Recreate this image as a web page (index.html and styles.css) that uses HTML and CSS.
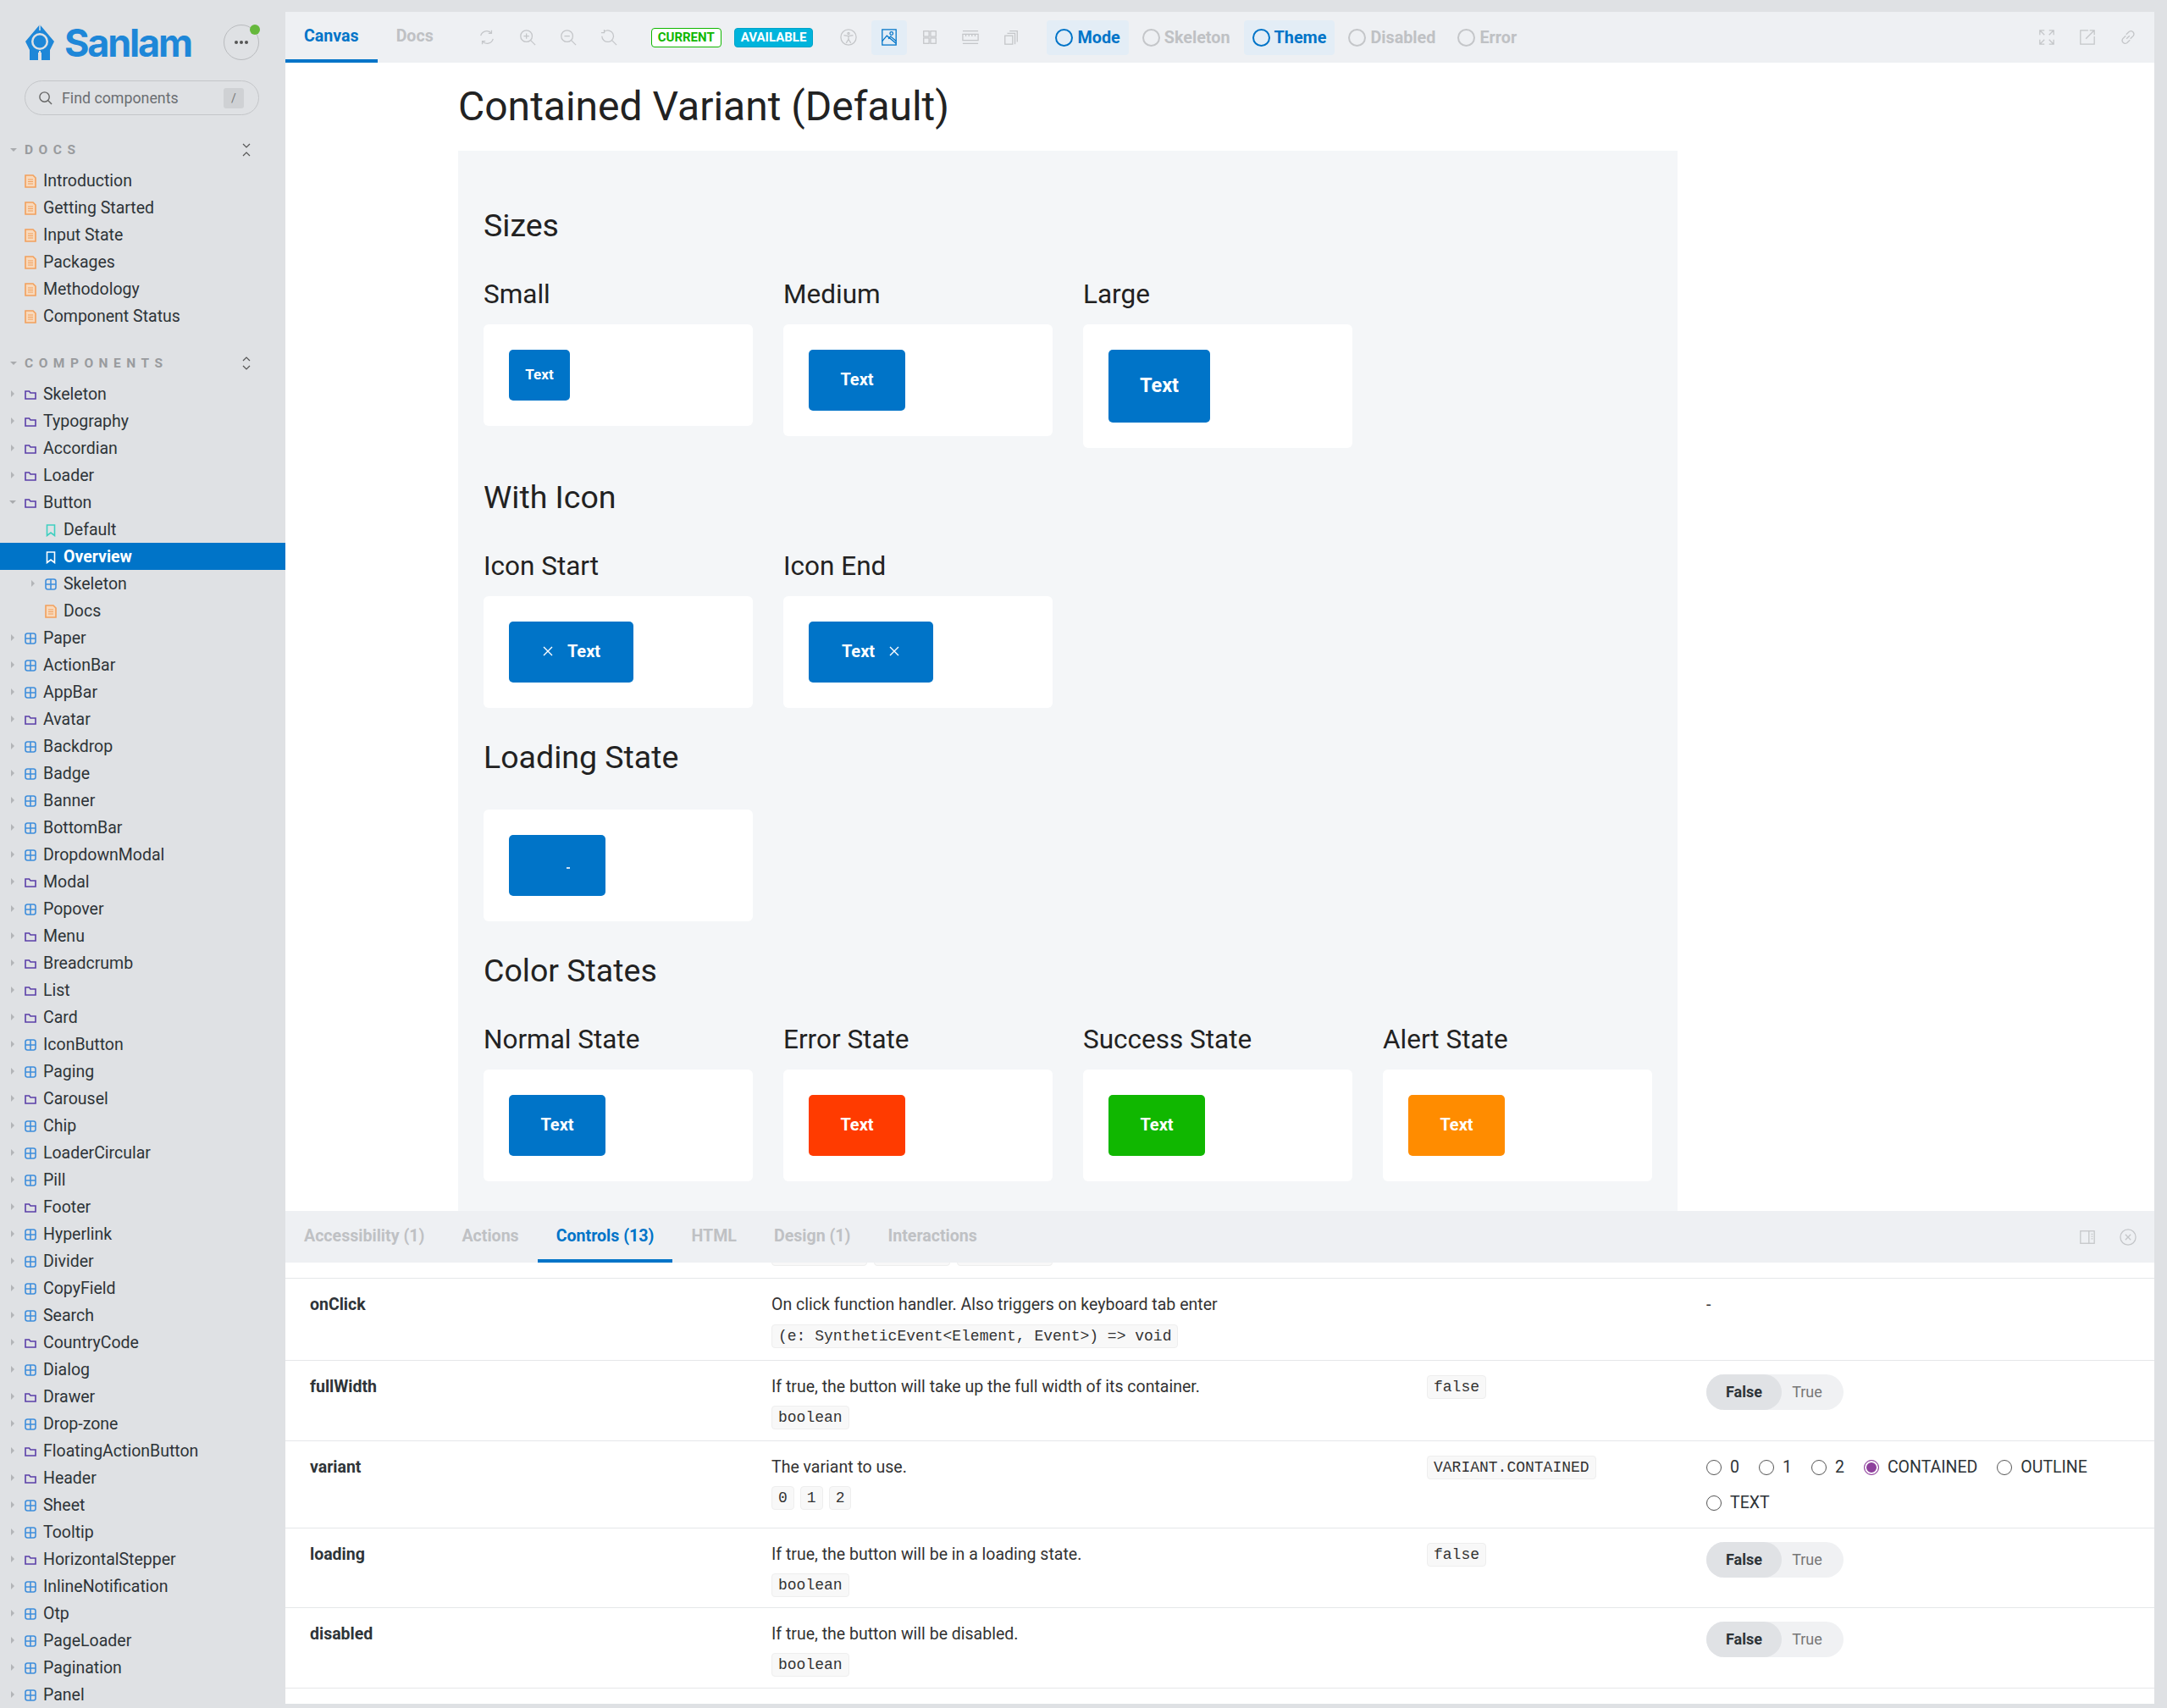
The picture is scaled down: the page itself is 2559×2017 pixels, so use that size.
FILE: index.html
```html
<!DOCTYPE html>
<html>
	<head>
		<title>Button / Overview</title>
		<link rel="stylesheet" href="styles.css">
	</head>
	<body>
		<svg class="defs" width="0" height="0">
			<symbol id="i-doc" viewBox="0 0 14 16"><path d="M1 1h9l3 3v11H1z" fill="#f8d9bc" stroke="#f2a05c" stroke-width="1.6"/><path d="M4 6h6M4 8.5h6M4 11h6" stroke="#f2a05c" stroke-width="1.2"/></symbol>
			<symbol id="i-folder" viewBox="0 0 14 16"><path d="M1 4h4.500l1.500 2h6v7H1z" fill="none" stroke="#5b3fa8" stroke-width="1.600"/></symbol>
			<symbol id="i-comp" viewBox="0 0 14 16"><rect x="1" y="2" width="12" height="12" rx="2.500" fill="none" stroke="#3f8edb" stroke-width="1.600"/><path d="M7 2v12M1 8h12" stroke="#3f8edb" stroke-width="1.600"/></symbol>
			<symbol id="i-story" viewBox="0 0 12 16"><path d="M1.500 2h9v12.500L6 11l-4.500 3.500z" fill="none" stroke="currentColor" stroke-width="1.600"/></symbol>
			<symbol id="i-x" viewBox="0 0 14 14"><path d="M2 2l10 10M12 2L2 12" fill="none" stroke="currentColor" stroke-width="1.400"/></symbol>
		</svg>

		<aside class="sidebar">
			<div class="brand">
				<svg class="brand-mark" viewBox="0 0 36 43">
					<path d="M18 0L35 20L30 30V42H20V33H16V42H6V30L1 20z" fill="#1e87d8"/>
					<path d="M18 0v7" stroke="#dfe1e4" stroke-width="1.500"/>
					<circle cx="18" cy="20" r="10" fill="#dfe1e4"/>
					<circle cx="18" cy="20" r="7.500" fill="#1e87d8"/>
					<path d="M18 31v12" stroke="#dfe1e4" stroke-width="2"/>
				</svg>
				<span class="brand-name">Sanlam</span>
				<span class="menu-btn"><i></i><i></i><i></i><b class="menu-dot"></b></span>
			</div>
			<div class="search">
				<svg class="search-ico" viewBox="0 0 18 18"><circle cx="8" cy="8" r="6" fill="none" stroke="#666" stroke-width="1.500"/><path d="M12.500 12.500L17 17" stroke="#666" stroke-width="1.500"/></svg>
				<span class="search-text">Find components</span>
				<span class="search-key">/</span>
			</div>

			<div class="side-head">
				<span class="caret-down"></span><span class="side-title">DOCS</span>
				<svg class="side-toggle" viewBox="0 0 10 16"><path d="M1 1l4 4 4-4M1 15l4-4 4 4" fill="none" stroke="#555" stroke-width="1.200"/></svg>
			</div>
			<ul class="tree">
				<li class="item"><span class="caret-none"></span><svg class="ico"><use href="#i-doc"/></svg>Introduction</li>
				<li class="item"><span class="caret-none"></span><svg class="ico"><use href="#i-doc"/></svg>Getting Started</li>
				<li class="item"><span class="caret-none"></span><svg class="ico"><use href="#i-doc"/></svg>Input State</li>
				<li class="item"><span class="caret-none"></span><svg class="ico"><use href="#i-doc"/></svg>Packages</li>
				<li class="item"><span class="caret-none"></span><svg class="ico"><use href="#i-doc"/></svg>Methodology</li>
				<li class="item"><span class="caret-none"></span><svg class="ico"><use href="#i-doc"/></svg>Component Status</li>
			</ul>

			<div class="side-head head-two">
				<span class="caret-down"></span><span class="side-title">COMPONENTS</span>
				<svg class="side-toggle" viewBox="0 0 10 16"><path d="M1 5l4-4 4 4M1 11l4 4 4-4" fill="none" stroke="#555" stroke-width="1.200"/></svg>
			</div>
			<ul class="tree">
				<li class="item"><span class="caret"></span><svg class="ico"><use href="#i-folder"/></svg>Skeleton</li>
				<li class="item"><span class="caret"></span><svg class="ico"><use href="#i-folder"/></svg>Typography</li>
				<li class="item"><span class="caret"></span><svg class="ico"><use href="#i-folder"/></svg>Accordian</li>
				<li class="item"><span class="caret"></span><svg class="ico"><use href="#i-folder"/></svg>Loader</li>
				<li class="item"><span class="caret-open"></span><svg class="ico"><use href="#i-folder"/></svg>Button</li>
				<li class="item nested"><span class="caret-none"></span><svg class="ico story"><use href="#i-story"/></svg>Default</li>
				<li class="item nested selected"><span class="caret-none"></span><svg class="ico"><use href="#i-story"/></svg>Overview</li>
				<li class="item nested"><span class="caret"></span><svg class="ico"><use href="#i-comp"/></svg>Skeleton</li>
				<li class="item nested"><span class="caret-none"></span><svg class="ico"><use href="#i-doc"/></svg>Docs</li>
				<li class="item"><span class="caret"></span><svg class="ico"><use href="#i-comp"/></svg>Paper</li>
				<li class="item"><span class="caret"></span><svg class="ico"><use href="#i-comp"/></svg>ActionBar</li>
				<li class="item"><span class="caret"></span><svg class="ico"><use href="#i-comp"/></svg>AppBar</li>
				<li class="item"><span class="caret"></span><svg class="ico"><use href="#i-folder"/></svg>Avatar</li>
				<li class="item"><span class="caret"></span><svg class="ico"><use href="#i-comp"/></svg>Backdrop</li>
				<li class="item"><span class="caret"></span><svg class="ico"><use href="#i-comp"/></svg>Badge</li>
				<li class="item"><span class="caret"></span><svg class="ico"><use href="#i-comp"/></svg>Banner</li>
				<li class="item"><span class="caret"></span><svg class="ico"><use href="#i-comp"/></svg>BottomBar</li>
				<li class="item"><span class="caret"></span><svg class="ico"><use href="#i-comp"/></svg>DropdownModal</li>
				<li class="item"><span class="caret"></span><svg class="ico"><use href="#i-folder"/></svg>Modal</li>
				<li class="item"><span class="caret"></span><svg class="ico"><use href="#i-comp"/></svg>Popover</li>
				<li class="item"><span class="caret"></span><svg class="ico"><use href="#i-folder"/></svg>Menu</li>
				<li class="item"><span class="caret"></span><svg class="ico"><use href="#i-folder"/></svg>Breadcrumb</li>
				<li class="item"><span class="caret"></span><svg class="ico"><use href="#i-folder"/></svg>List</li>
				<li class="item"><span class="caret"></span><svg class="ico"><use href="#i-folder"/></svg>Card</li>
				<li class="item"><span class="caret"></span><svg class="ico"><use href="#i-comp"/></svg>IconButton</li>
				<li class="item"><span class="caret"></span><svg class="ico"><use href="#i-comp"/></svg>Paging</li>
				<li class="item"><span class="caret"></span><svg class="ico"><use href="#i-folder"/></svg>Carousel</li>
				<li class="item"><span class="caret"></span><svg class="ico"><use href="#i-comp"/></svg>Chip</li>
				<li class="item"><span class="caret"></span><svg class="ico"><use href="#i-comp"/></svg>LoaderCircular</li>
				<li class="item"><span class="caret"></span><svg class="ico"><use href="#i-comp"/></svg>Pill</li>
				<li class="item"><span class="caret"></span><svg class="ico"><use href="#i-folder"/></svg>Footer</li>
				<li class="item"><span class="caret"></span><svg class="ico"><use href="#i-comp"/></svg>Hyperlink</li>
				<li class="item"><span class="caret"></span><svg class="ico"><use href="#i-comp"/></svg>Divider</li>
				<li class="item"><span class="caret"></span><svg class="ico"><use href="#i-comp"/></svg>CopyField</li>
				<li class="item"><span class="caret"></span><svg class="ico"><use href="#i-comp"/></svg>Search</li>
				<li class="item"><span class="caret"></span><svg class="ico"><use href="#i-folder"/></svg>CountryCode</li>
				<li class="item"><span class="caret"></span><svg class="ico"><use href="#i-comp"/></svg>Dialog</li>
				<li class="item"><span class="caret"></span><svg class="ico"><use href="#i-folder"/></svg>Drawer</li>
				<li class="item"><span class="caret"></span><svg class="ico"><use href="#i-comp"/></svg>Drop-zone</li>
				<li class="item"><span class="caret"></span><svg class="ico"><use href="#i-folder"/></svg>FloatingActionButton</li>
				<li class="item"><span class="caret"></span><svg class="ico"><use href="#i-folder"/></svg>Header</li>
				<li class="item"><span class="caret"></span><svg class="ico"><use href="#i-comp"/></svg>Sheet</li>
				<li class="item"><span class="caret"></span><svg class="ico"><use href="#i-comp"/></svg>Tooltip</li>
				<li class="item"><span class="caret"></span><svg class="ico"><use href="#i-folder"/></svg>HorizontalStepper</li>
				<li class="item"><span class="caret"></span><svg class="ico"><use href="#i-comp"/></svg>InlineNotification</li>
				<li class="item"><span class="caret"></span><svg class="ico"><use href="#i-comp"/></svg>Otp</li>
				<li class="item"><span class="caret"></span><svg class="ico"><use href="#i-comp"/></svg>PageLoader</li>
				<li class="item"><span class="caret"></span><svg class="ico"><use href="#i-comp"/></svg>Pagination</li>
				<li class="item"><span class="caret"></span><svg class="ico"><use href="#i-comp"/></svg>Panel</li>
			</ul>
		</aside>

		<main class="main">
			<div class="bar toolbar">
				<span class="tab active">Canvas</span>
				<span class="tab">Docs</span>
				<div class="tools tools-zoom">
					<span class="tool"><svg viewBox="0 0 22 22"><path d="M3 9a8 8 0 0 1 14-3M19 13a8 8 0 0 1-14 3" /><path d="M17 2v4h-4M5 20v-4h4"/></svg></span>
					<span class="tool"><svg viewBox="0 0 22 22"><circle cx="9.500" cy="9.500" r="7.500"/><path d="M15 15l6 6M9.500 6v7M6 9.500h7"/></svg></span>
					<span class="tool"><svg viewBox="0 0 22 22"><circle cx="9.500" cy="9.500" r="7.500"/><path d="M15 15l6 6M6 9.500h7"/></svg></span>
					<span class="tool"><svg viewBox="0 0 22 22"><path d="M5 3.500a7.500 7.500 0 1 1-3 6"/><path d="M15 15l6 6M5 1v4H1"/></svg></span>
				</div>
				<span class="badge badge-current">CURRENT</span>
				<span class="badge badge-available">AVAILABLE</span>
				<div class="tools tools-view">
					<span class="tool"><svg viewBox="0 0 22 22"><circle cx="11" cy="11" r="10"/><circle cx="11" cy="6" r="1.200"/><path d="M5 8.500l6 1 6-1M11 9.500v4l-3 5M11 13.500l3 5"/></svg></span>
					<span class="tool tool-on"><svg viewBox="0 0 22 22"><rect x="2" y="1" width="18" height="20"/><circle cx="14" cy="6" r="2"/><path d="M2 16l6-7 12 10M10 13l3-3 7 6"/></svg></span>
					<span class="tool"><svg viewBox="0 0 22 22"><rect x="3" y="3" width="7" height="7"/><rect x="12" y="3" width="7" height="7"/><rect x="3" y="12" width="7" height="7"/><rect x="12" y="12" width="7" height="7"/></svg></span>
					<span class="tool"><svg viewBox="0 0 22 22"><path d="M1 3h20M1 19h20"/><rect x="1" y="7" width="20" height="8"/><path d="M5 7v3M9 7v3M13 7v3M17 7v3"/></svg></span>
					<span class="tool"><svg viewBox="0 0 22 22"><rect x="3" y="9" width="10" height="11"/><path d="M6 6h10v14M9 3h10v14"/></svg></span>
				</div>
				<div class="pills">
					<span class="pill pill-on"><i class="ring"></i>Mode</span>
					<span class="pill"><i class="ring"></i>Skeleton</span>
					<span class="pill pill-on"><i class="ring"></i>Theme</span>
					<span class="pill"><i class="ring"></i>Disabled</span>
					<span class="pill"><i class="ring"></i>Error</span>
				</div>
				<div class="tools tools-right">
					<span class="tool"><svg viewBox="0 0 22 22"><path d="M2 8V2h6M2 2l6 6M14 2h6v6M20 2l-6 6M2 14v6h6M2 20l6-6M20 14v6h-6M20 20l-6-6"/></svg></span>
					<span class="tool"><svg viewBox="0 0 22 22"><path d="M12 2H2v18h18V10M9 13L20 2M14 2h6v6"/></svg></span>
					<span class="tool"><svg viewBox="0 0 22 22"><path d="M9 13l4-4M8 9l-4 4a4 4 0 0 0 5.500 5.500l4-4M14 13l4-4A4 4 0 0 0 12.500 3.500l-4 4"/></svg></span>
				</div>
			</div>

			<div class="canvas">
				<h1 class="title">Contained Variant (Default)</h1>
				<div class="sheet">
					<h2 class="heading">Sizes</h2>
					<div class="grid">
						<div>
							<h3 class="label">Small</h3>
							<div class="card"><span class="btn btn-sm">Text</span></div>
						</div>
						<div>
							<h3 class="label">Medium</h3>
							<div class="card"><span class="btn">Text</span></div>
						</div>
						<div>
							<h3 class="label">Large</h3>
							<div class="card"><span class="btn btn-lg">Text</span></div>
						</div>
					</div>

					<h2 class="heading">With Icon</h2>
					<div class="grid">
						<div>
							<h3 class="label">Icon Start</h3>
							<div class="card"><span class="btn btn-icon"><svg class="btn-x"><use href="#i-x"/></svg>Text</span></div>
						</div>
						<div>
							<h3 class="label">Icon End</h3>
							<div class="card"><span class="btn btn-icon">Text<svg class="btn-x"><use href="#i-x"/></svg></span></div>
						</div>
					</div>

					<h2 class="heading">Loading State</h2>
					<div class="grid">
						<div class="card"><span class="btn"><i class="spinner"></i></span></div>
					</div>

					<h2 class="heading">Color States</h2>
					<div class="grid">
						<div>
							<h3 class="label">Normal State</h3>
							<div class="card"><span class="btn">Text</span></div>
						</div>
						<div>
							<h3 class="label">Error State</h3>
							<div class="card"><span class="btn btn-error">Text</span></div>
						</div>
						<div>
							<h3 class="label">Success State</h3>
							<div class="card"><span class="btn btn-success">Text</span></div>
						</div>
						<div>
							<h3 class="label">Alert State</h3>
							<div class="card"><span class="btn btn-alert">Text</span></div>
						</div>
					</div>
				</div>
			</div>

			<div class="addons">
				<div class="bar addon-bar">
					<span class="tab">Accessibility (1)</span>
					<span class="tab">Actions</span>
					<span class="tab active">Controls (13)</span>
					<span class="tab">HTML</span>
					<span class="tab">Design (1)</span>
					<span class="tab">Interactions</span>
					<div class="tools tools-right">
						<span class="tool"><svg viewBox="0 0 22 22"><rect x="2" y="3" width="18" height="16"/><path d="M13 3v16M16 7h2M16 10h2M16 13h2"/></svg></span>
						<span class="tool"><svg viewBox="0 0 22 22"><circle cx="11" cy="11" r="10"/><path d="M7.500 7.500l7 7M14.500 7.500l-7 7"/></svg></span>
					</div>
				</div>
				<div class="args">
					<div class="cut-row">
						<span class="code cut-a">&nbsp;</span><span class="code cut-b">&nbsp;</span><span class="code cut-a">&nbsp;</span>
					</div>
					<div class="row row-first">
						<div class="arg-name">onClick</div>
						<div>
							<div class="arg-desc">On click function handler. Also triggers on keyboard tab enter</div>
							<div class="chips"><span class="code">(e: SyntheticEvent&lt;Element, Event&gt;) =&gt; void</span></div>
						</div>
						<div></div>
						<div class="arg-desc">-</div>
					</div>
					<div class="row">
						<div class="arg-name">fullWidth</div>
						<div>
							<div class="arg-desc">If true, the button will take up the full width of its container.</div>
							<div class="chips"><span class="code">boolean</span></div>
						</div>
						<div class="arg-default"><span class="code">false</span></div>
						<div class="toggle"><span class="toggle-on">False</span><span class="toggle-off">True</span></div>
					</div>
					<div class="row row-variant">
						<div class="arg-name">variant</div>
						<div>
							<div class="arg-desc">The variant to use.</div>
							<div class="chips"><span class="code">0</span><span class="code">1</span><span class="code">2</span></div>
						</div>
						<div class="arg-default"><span class="code">VARIANT.CONTAINED</span></div>
						<div class="radios">
							<span class="radio"><i class="dot"></i>0</span>
							<span class="radio"><i class="dot"></i>1</span>
							<span class="radio"><i class="dot"></i>2</span>
							<span class="radio"><i class="dot dot-on"></i>CONTAINED</span>
							<span class="radio"><i class="dot"></i>OUTLINE</span>
							<span class="radio"><i class="dot"></i>TEXT</span>
						</div>
					</div>
					<div class="row row-short">
						<div class="arg-name">loading</div>
						<div>
							<div class="arg-desc">If true, the button will be in a loading state.</div>
							<div class="chips"><span class="code">boolean</span></div>
						</div>
						<div class="arg-default"><span class="code">false</span></div>
						<div class="toggle"><span class="toggle-on">False</span><span class="toggle-off">True</span></div>
					</div>
					<div class="row">
						<div class="arg-name">disabled</div>
						<div>
							<div class="arg-desc">If true, the button will be disabled.</div>
							<div class="chips"><span class="code">boolean</span></div>
						</div>
						<div></div>
						<div class="toggle"><span class="toggle-on">False</span><span class="toggle-off">True</span></div>
					</div>
				</div>
			</div>
		</main>
	</body>
</html>
```

FILE: styles.css
```css
html, body {
	height: 100%;
}

body {
	margin: 0;
	height: 2017px;
	overflow: hidden;
	display: flex;
	background: #dfe1e4;
	font-family: Roboto, "Liberation Sans", sans-serif;
	font-size: 19.500px;
	color: #2e3438;
}

.defs {
	position: absolute;
}

/* sidebar */

.sidebar {
	width: 337px;
	flex: none;
	box-sizing: border-box;
	padding-top: 29px;
}

.brand {
	display: flex;
	align-items: center;
	height: 42px;
	padding-left: 29px;
}

.brand-mark {
	width: 36px;
	height: 43px;
	flex: none;
}

.brand-name {
	margin-left: 11px;
	font-family: Inter, Roboto, sans-serif;
	font-size: 45px;
	font-weight: 700;
	letter-spacing: -2.200px;
	color: #1e87d8;
}

.menu-btn {
	position: relative;
	box-sizing: border-box;
	width: 42px;
	height: 42px;
	margin-left: auto;
	margin-right: 31px;
	display: flex;
	align-items: center;
	justify-content: center;
	gap: 2px;
	border: 1px solid #b9bbbe;
	border-radius: 50%;
}

.menu-btn i {
	width: 4px;
	height: 4px;
	border-radius: 50%;
	background: #555;
}

.menu-dot {
	position: absolute;
	top: -1px;
	right: -2px;
	width: 12px;
	height: 12px;
	border-radius: 50%;
	background: #66b83c;
}

.search {
	box-sizing: border-box;
	display: flex;
	align-items: center;
	width: 277px;
	height: 41px;
	margin: 24px 0 0 29px;
	padding: 0 17px 0 15px;
	border: 1px solid #c4c6c9;
	border-radius: 21px;
}

.search-ico {
	width: 17px;
	height: 17px;
	flex: none;
}

.search-text {
	margin-left: 11px;
	font-size: 17.800px;
	color: #6b6e72;
}

.search-key {
	margin-left: auto;
	width: 24px;
	height: 24px;
	line-height: 24px;
	text-align: center;
	font-size: 14px;
	color: #777;
	background: #cfd1d4;
	border-radius: 3px;
}

.side-head {
	display: flex;
	align-items: center;
	height: 32px;
	margin-top: 25px;
	margin-bottom: 4px;
	padding-left: 12px;
}

.head-two {
	margin-top: 24px;
}

.caret-down {
	width: 0;
	height: 0;
	margin-right: 9px;
	border-left: 4px solid transparent;
	border-right: 4px solid transparent;
	border-top: 4px solid #a9abae;
}

.side-title {
	font-size: 15.500px;
	font-weight: 700;
	letter-spacing: 6.500px;
	color: #999b9e;
}

.side-toggle {
	position: absolute;
	left: 286px;
	width: 10px;
	height: 16px;
}

.tree {
	list-style: none;
	margin: 0;
	padding: 0;
}

.item {
	display: flex;
	align-items: center;
	height: 32px;
	padding-left: 13px;
	white-space: nowrap;
}

.item.nested {
	padding-left: 37px;
}

.item.selected {
	background: #0074c8;
	color: #fff;
	font-weight: 700;
}

.caret, .caret-open, .caret-none {
	flex: none;
	width: 16px;
}

.caret {
	width: 0;
	height: 0;
	margin-right: 12px;
	border-top: 4px solid transparent;
	border-bottom: 4px solid transparent;
	border-left: 4px solid #b3b5b8;
}

.caret-open {
	width: 0;
	height: 0;
	margin-left: -2px;
	margin-right: 10px;
	border-left: 4px solid transparent;
	border-right: 4px solid transparent;
	border-top: 4px solid #a9abae;
}

.ico {
	flex: none;
	width: 14px;
	height: 16px;
	margin-right: 8px;
	margin-top: 2px;
}

.story {
	color: #3fcfc0;
}

/* toolbars */

.main {
	flex: 1;
	min-width: 0;
	display: flex;
	flex-direction: column;
	margin: 14px 15px 5px 0;
	background: #fff;
}

.bar {
	display: flex;
	align-items: center;
	flex: none;
	height: 60px;
	background: #eef0f3;
}

.tab {
	box-sizing: border-box;
	height: 100%;
	padding: 0 22px;
	line-height: 58px;
	font-size: 19.600px;
	font-weight: 700;
	color: #bfc1c4;
	border-bottom: 4px solid transparent;
}

.tab.active {
	color: #0074c8;
	border-bottom-color: #0074c8;
}

.tools {
	display: flex;
	gap: 6px;
}

.tools-zoom {
	margin-left: 20px;
}

.tools-view {
	margin-left: 21px;
}

.tools-right {
	margin-left: auto;
	margin-right: 10px;
}

.tool {
	display: flex;
	align-items: center;
	justify-content: center;
	width: 42px;
	height: 41px;
	border-radius: 4px;
}

.tool svg {
	width: 20px;
	height: 20px;
	fill: none;
	stroke: #c4c6c9;
	stroke-width: 1.400;
}

.tool-on {
	background: #e3edf6;
}

.tool-on svg {
	stroke: #0074c8;
}

.badge {
	box-sizing: border-box;
	height: 23px;
	line-height: 21px;
	padding: 0 7px;
	border-radius: 4px;
	font-size: 15px;
	font-weight: 700;
	white-space: nowrap;
}

.badge-current {
	margin-left: 29px;
	color: #10b700;
	background: #fff;
	border: 1px solid #10b700;
}

.badge-available {
	margin-left: 15px;
	color: #fff;
	background: #00b4dc;
	border: 1px solid #00a3c8;
}

.pills {
	display: flex;
	gap: 6px;
	margin-left: 21px;
}

.pill {
	display: flex;
	align-items: center;
	gap: 5px;
	height: 41px;
	padding: 0 10px;
	border-radius: 4px;
	font-size: 19.800px;
	font-weight: 700;
	color: #bfc1c4;
}

.ring {
	width: 21px;
	height: 21px;
	box-sizing: border-box;
	border: 2px solid #c4c6c9;
	border-radius: 50%;
}

.pill-on {
	color: #0074c8;
	background: #e3edf6;
}

.pill-on .ring {
	border-color: #0074c8;
}

/* canvas */

.canvas {
	flex: none;
	height: 1356px;
	box-sizing: border-box;
	overflow: hidden;
	padding: 22px 0 0 204px;
}

.title {
	margin: 0 0 22px;
	font-size: 48px;
	line-height: 60px;
	font-weight: 400;
	color: #222;
}

.sheet {
	box-sizing: border-box;
	width: 1440px;
	padding: 30px 30px 80px;
	background: #f4f6f8;
}

.heading {
	margin: 36px 0 40px;
	font-size: 37.500px;
	line-height: 44px;
	font-weight: 400;
	color: #222;
}

.label {
	margin: 0 0 16px;
	font-size: 31.500px;
	line-height: 39px;
	font-weight: 400;
	color: #222;
}

.grid {
	display: grid;
	grid-template-columns: repeat(4, 318px);
	column-gap: 36px;
	align-items: start;
}

.card {
	padding: 30px;
	background: #fff;
	border-radius: 6px;
}

.btn {
	box-sizing: border-box;
	display: flex;
	align-items: center;
	justify-content: center;
	width: 114px;
	height: 72px;
	padding-bottom: 2px;
	background: #0074c8;
	color: #fff;
	border-radius: 5px;
	font-size: 20px;
	font-weight: 700;
}

.btn-sm {
	width: 72px;
	height: 60px;
	font-size: 17px;
}

.btn-lg {
	width: 120px;
	height: 86px;
	font-size: 23.500px;
}

.btn-icon {
	width: 147px;
	gap: 16px;
}

.btn-x {
	width: 14px;
	height: 14px;
	color: #fff;
}

.btn-error {
	background: #ff3b00;
}

.btn-success {
	background: #10b700;
}

.btn-alert {
	background: #ff8c00;
}

.spinner {
	width: 4px;
	height: 2px;
	margin: 8px 0 0 26px;
	background: #cfe3f4;
}

/* addon panel */

.addons {
	flex: 1;
	min-height: 0;
	overflow: hidden;
}

.addon-bar {
	height: 61px;
}

.addon-bar .tab {
	line-height: 60px;
}

.args {
	font-size: 19.500px;
}

.cut-row {
	display: flex;
	gap: 8px;
	height: 18px;
	overflow: hidden;
	padding-left: 574px;
	border-bottom: 1px solid #e5e7e9;
}

.cut-row .code {
	margin-top: -24px;
}

.cut-a {
	width: 113px;
}

.cut-b {
	width: 90px;
}

.row {
	display: grid;
	grid-template-columns: 545px 774px 330px 1fr;
	padding: 16px 0 13px 29px;
	border-bottom: 1px solid #e5e7e9;
	line-height: 30px;
}

.row-first {
	padding-bottom: 14px;
}

.row-first .chips {
	margin-top: 8px;
}

.row-variant {
	padding-bottom: 14px;
}

.row-short {
	padding-bottom: 12px;
}

.arg-name {
	font-weight: 700;
	color: #2e3438;
}

.arg-desc {
	color: #333;
}

.arg-default {
	margin-top: 1px;
}

.chips {
	display: flex;
	gap: 7px;
	margin-top: 7px;
}

.code {
	display: inline-block;
	box-sizing: border-box;
	height: 28px;
	line-height: 26px;
	padding: 0 7px;
	font-family: "Liberation Mono", monospace;
	font-size: 18px;
	color: #333;
	background: #f8f8f8;
	border: 1px solid #eee;
	border-radius: 4px;
	vertical-align: top;
}

.toggle {
	display: flex;
	align-self: start;
	justify-self: start;
	height: 42px;
	line-height: 42px;
	font-size: 18px;
	border-radius: 21px;
	background: #f0f1f3;
}

.toggle-on {
	width: 89px;
	text-align: center;
	font-weight: 700;
	background: #e0e2e5;
	border-radius: 21px;
}

.toggle-off {
	box-sizing: border-box;
	width: 73px;
	padding-right: 13px;
	text-align: center;
	color: #777;
}

.radios {
	display: flex;
	flex-wrap: wrap;
	column-gap: 23px;
	row-gap: 12px;
}

.radio {
	display: flex;
	align-items: center;
	gap: 10px;
	height: 30px;
}

.dot {
	box-sizing: border-box;
	width: 18px;
	height: 18px;
	border: 1px solid #555;
	border-radius: 50%;
	background: #fff;
}

.dot-on {
	border-color: #8e3f9c;
	background: #8e3f9c;
	box-shadow: inset 0 0 0 2px #fff;
}
```
